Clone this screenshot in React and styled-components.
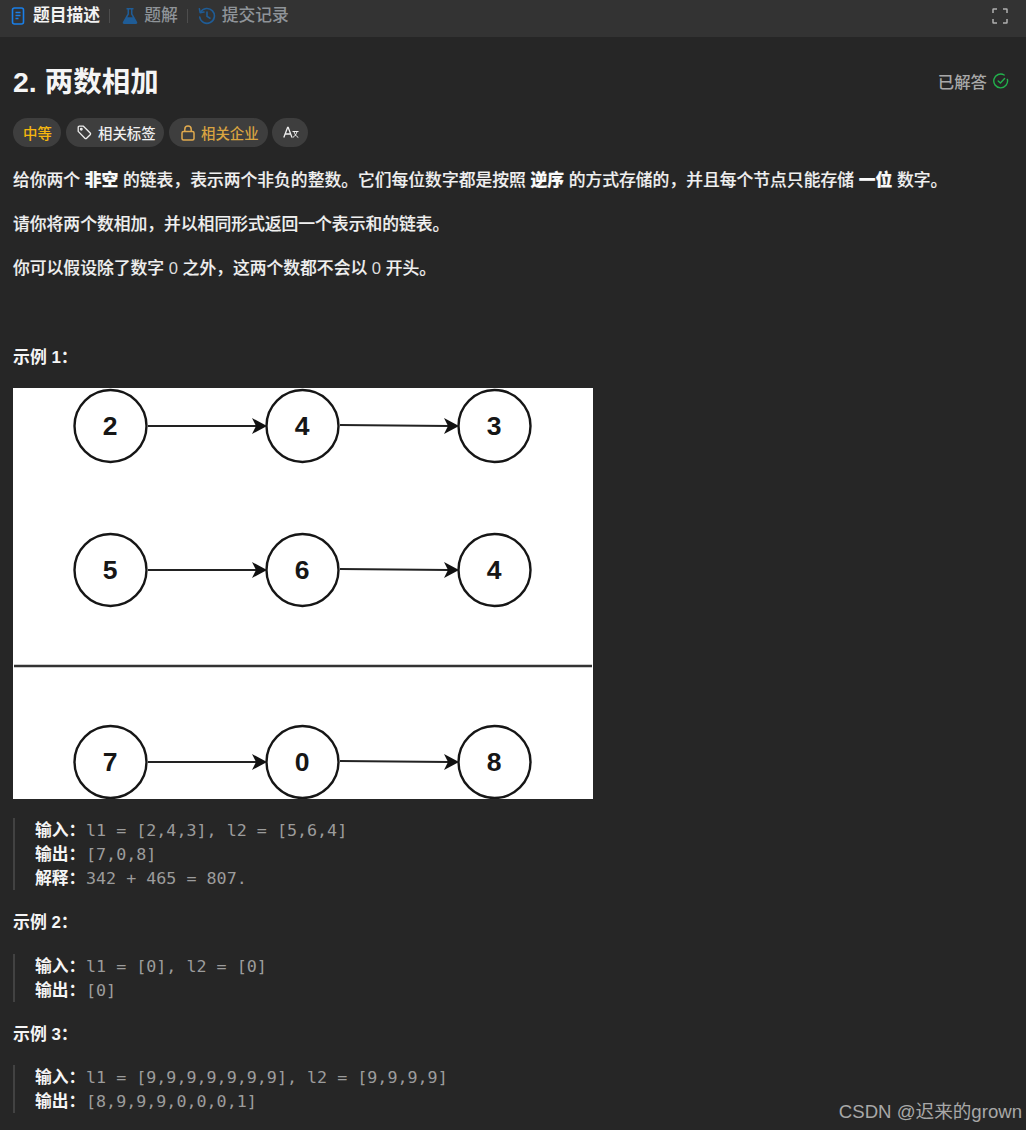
import React from "react";
import styled, { createGlobalStyle } from "styled-components";

const Global = createGlobalStyle`
  html, body { margin: 0; padding: 0; background: #262626; }
  body { font-family: "Liberation Sans", "Noto Sans CJK SC", sans-serif; color: #f0f0f0; }
  #root { height: 1130px; overflow: hidden; position: relative; }
`;

const TabBar = styled.div`
  height: 37px; background: #333333; display: flex; align-items: center;
  padding: 0 18px 6px 11px; box-sizing: border-box; justify-content: space-between;
`;
const Tabs = styled.div`display: flex; align-items: center;`;
const Tab = styled.div`
  display: flex; align-items: center; gap: ${p => p.$gap || 6}px; font-size: 16.8px; line-height: 20px;
  font-weight: ${p => (p.$active ? 700 : 500)};
  color: ${p => (p.$active ? "#f2f2f2" : "#8f9499")};
`;
const Sep = styled.div`width: 1px; height: 14px; background: #4d4d4d; margin: 0 ${p => p.$right}px 0 9px;`;
const Main = styled.div`padding: 0 13px; `;
const TitleRow = styled.div`
  display: flex; align-items: center; justify-content: space-between;
  height: 34px; margin-top: 28px; padding-right: 4px;
`;
const Title = styled.h1`font-size: 28.5px; font-weight: 700; margin: 0; color: #f5f5f5; line-height: 34px;`;
const Solved = styled.div`display: flex; align-items: center; gap: 6px; color: #a8a8a8; font-size: 16.4px; font-weight: 500; margin-bottom: 3px;`;
const Tags = styled.div`display: flex; margin-top: 19px; height: 29px;`;
const Tag = styled.div`
  display: flex; align-items: center; gap: 6px; height: 29px; box-sizing: border-box;
  width: ${p => p.$w}px; margin-right: ${p => p.$mr || 0}px; padding-left: ${p => p.$pl}px;
  border-radius: 15px; background: #3e3e3e; font-size: 14.4px; font-weight: 500; color: ${p => p.$color || "#eeeeee"};
`;
const Para = styled.p`
  margin: ${p => p.$top || 0}px 0 0; font-size: 16.8px; line-height: 24px; font-weight: 500; color: #f0f0f0;
  -webkit-text-stroke: 0.15px #f0f0f0;
  white-space: nowrap;
  strong { font-weight: 900; color: #fafafa; }
`;
const Code = styled.span`font-family: "Liberation Sans", sans-serif; font-size: 16.6px; font-weight: 400; color: #dddddd; -webkit-text-stroke: 0;`;
const Heading = styled.div`
  margin-top: ${p => p.$top}px; font-size: 16.9px; line-height: 24px; font-weight: 700; color: #f5f5f5;
`;
const Figure = styled.svg`display: block; width: 580px; height: 411px; margin-top: 18px; background: #ffffff;`;
const Block = styled.div`
  margin-top: ${p => p.$top}px; border-left: 2px solid #424242; padding-left: 20px;
  display: flex; flex-direction: column;
`;
const Line = styled.div`
  height: 24px; line-height: 24px; display: flex; align-items: baseline; white-space: pre;
  font-family: "DejaVu Sans Mono", monospace; font-size: 16.7px; color: #9c9c9c;
`;
const Label = styled.strong`
  font-family: "Liberation Sans", "Noto Sans CJK SC", sans-serif; font-size: 16.8px; font-weight: 700;
  color: #f5f5f5; width: 51px; flex: none;
`;
const Watermark = styled.div`
  position: absolute; right: 4px; bottom: 6px; font-size: 18.6px; line-height: 24px;
  color: #a8a8a8; font-weight: 400;
`;

const Node = ({ x, y, n }) => (
  <g>
    <circle cx={x} cy={y} r="36" fill="#fff" stroke="#161616" strokeWidth="2.4" />
    <text x={x - 0.5} y={y + 9} textAnchor="middle" fontFamily="Liberation Sans" fontWeight="700" fontSize="26.5" fill="#161616">{n}</text>
  </g>
);
const Arrow = ({ x1, x2, y, y2 }) => (
  <g>
    <line x1={x1} x2={x2 - 10} y1={y} y2={y2} stroke="#222" strokeWidth="2.2" />
    <path d={`M${x2} ${y2}L${x2 - 15} ${y2 - 8}L${x2 - 11} ${y2}L${x2 - 15} ${y2 + 8}Z`} fill="#111" />
  </g>
);
const Row = ({ y, a, b, c }) => (
  <g>
    <Arrow x1={135} x2={254} y={y} y2={y} />
    <Arrow x1={327} x2={446} y={y - 1} y2={y} />
    <Node x={97.5} y={y} n={a} />
    <Node x={289.5} y={y} n={b} />
    <Node x={481.5} y={y} n={c} />
  </g>
);

const DocIcon = () => (
  <svg width="14" height="18" viewBox="0 0 14 18" fill="none" stroke="#1a7fe8" strokeWidth="1.6">
    <rect x="1.5" y="1" width="11" height="16" rx="2" />
    <path d="M4.5 5.5h5M4.5 8.5h5M4.5 11.5h3" />
  </svg>
);
const FlaskIcon = () => (
  <svg width="16" height="18" viewBox="0 0 16 18" fill="#1f5c96">
    <path d="M4.5 1h7v1.400h-1v4.400l4.600 8.200c.5 1-.1 2-1.200 2H2.100c-1.100 0-1.700-1-1.200-2l4.600-8.200V2.400h-1zM7 2.400v4.800l-1.700 3h5.400L9 7.200V2.400z" />
  </svg>
);
const HistoryIcon = () => (
  <svg width="18" height="18" viewBox="0 0 18 18" fill="none" stroke="#1f5c96" strokeWidth="1.6" strokeLinecap="round" strokeLinejoin="round">
    <path d="M2.600 5.200A7.400 7.400 0 1 1 1.700 10" />
    <path d="M1.400 1.800 2.200 5.600 6 5" />
    <path d="M9 5v4.400l3 1.800" />
  </svg>
);
const Expand = () => (
  <svg width="16" height="16" viewBox="0 0 16 16" fill="none" stroke="#b0b0b0" strokeWidth="1.5">
    <path d="M1 5V1.500Q1 1 1.500 1H5M11 1h3.500Q15 1 15 1.500V5M15 11v3.500Q15 15 14.500 15H11M5 15H1.500Q1 15 1 14.500V11" />
  </svg>
);
const Check = () => (
  <svg width="16" height="16" viewBox="0 0 16 16" fill="none" stroke="#22b14c" strokeWidth="1.4" strokeLinecap="round" strokeLinejoin="round">
    <path d="M14.400 6.400A6.900 6.900 0 1 1 11.200 2" />
    <path d="M5.200 8 7.400 10 11.600 5.600" />
  </svg>
);
const TagIcon = () => (
  <svg width="15" height="15" viewBox="0 0 15 15" fill="none" stroke="#eeeeee" strokeWidth="1.3" strokeLinejoin="round">
    <path d="M1.200 2.400c0-.7.5-1.200 1.200-1.200h4l6.800 6.800c.5.5.5 1.200 0 1.700l-3.600 3.600c-.5.5-1.200.5-1.700 0L1.200 6.400z" />
    <circle cx="4.300" cy="4.300" r=".8" />
  </svg>
);
const LockIcon = () => (
  <svg width="14" height="16" viewBox="0 0 14 16" fill="none" stroke="#e0a94e" strokeWidth="1.5">
    <rect x="1" y="6.500" width="12" height="8.500" rx="1.500" />
    <path d="M3.800 6.500V4.200a3.200 3.200 0 0 1 6.400 0v2.300" />
  </svg>
);
const TranslateIcon = () => (
  <svg width="16" height="14" viewBox="0 0 16 14" fill="none" stroke="#eeeeee" strokeWidth="1.3">
    <path d="M.8 11.500 4.600 1.500h.6l3.800 10M2.100 8h5.600" />
    <path d="M9.500 5.500h6M11 5.500c.5 2.500 2 4.800 4.300 6M14 5.500c-.5 2.500-2 4.800-4.300 6" strokeWidth="1" />
  </svg>
);

export default function App() {
  return (
    <>
      <Global />
      <TabBar>
        <Tabs>
          <Tab $active $gap={8}><DocIcon />题目描述</Tab>
          <Sep $right={12} />
          <Tab><FlaskIcon />题解</Tab>
          <Sep $right={10} />
          <Tab><HistoryIcon />提交记录</Tab>
        </Tabs>
        <Expand />
      </TabBar>
      <Main>
        <TitleRow>
          <Title>2. 两数相加</Title>
          <Solved>已解答<Check /></Solved>
        </TitleRow>
        <Tags>
          <Tag $color="#f5b70f" $w={48} $pl={10} $mr={5}>中等</Tag>
          <Tag $w={98} $pl={11} $mr={5}><TagIcon />相关标签</Tag>
          <Tag $color="#d9a441" $w={99} $pl={12} $mr={4}><LockIcon />相关企业</Tag>
          <Tag $w={36} $pl={11}><TranslateIcon /></Tag>
        </Tags>
        <Para $top={22}>给你两个 <strong>非空</strong> 的链表，表示两个非负的整数。它们每位数字都是按照 <strong>逆序</strong> 的方式存储的，并且每个节点只能存储 <strong>一位</strong> 数字。</Para>
        <Para $top={20}>请你将两个数相加，并以相同形式返回一个表示和的链表。</Para>
        <Para $top={20}>你可以假设除了数字 <Code>0</Code> 之外，这两个数都不会以 <Code>0</Code> 开头。</Para>
        <Heading $top={65}>示例 1：</Heading>
        <Figure viewBox="0 0 580 411">
          <Row y={38} a="2" b="4" c="3" />
          <Row y={182} a="5" b="6" c="4" />
          <line x1="1" x2="579" y1="278" y2="278" stroke="#333" strokeWidth="2.4" />
          <Row y={374} a="7" b="0" c="8" />
        </Figure>
        <Block $top={19}>
          <Line><Label>输入：</Label>l1 = [2,4,3], l2 = [5,6,4]</Line>
          <Line><Label>输出：</Label>[7,0,8]</Line>
          <Line><Label>解释：</Label>342 + 465 = 807.</Line>
        </Block>
        <Heading $top={21}>示例 2：</Heading>
        <Block $top={19}>
          <Line><Label>输入：</Label>l1 = [0], l2 = [0]</Line>
          <Line><Label>输出：</Label>[0]</Line>
        </Block>
        <Heading $top={21}>示例 3：</Heading>
        <Block $top={18}>
          <Line><Label>输入：</Label>l1 = [9,9,9,9,9,9,9], l2 = [9,9,9,9]</Line>
          <Line><Label>输出：</Label>[8,9,9,9,0,0,0,1]</Line>
        </Block>
      </Main>
      <Watermark>CSDN @迟来的grown</Watermark>
    </>
  );
}
